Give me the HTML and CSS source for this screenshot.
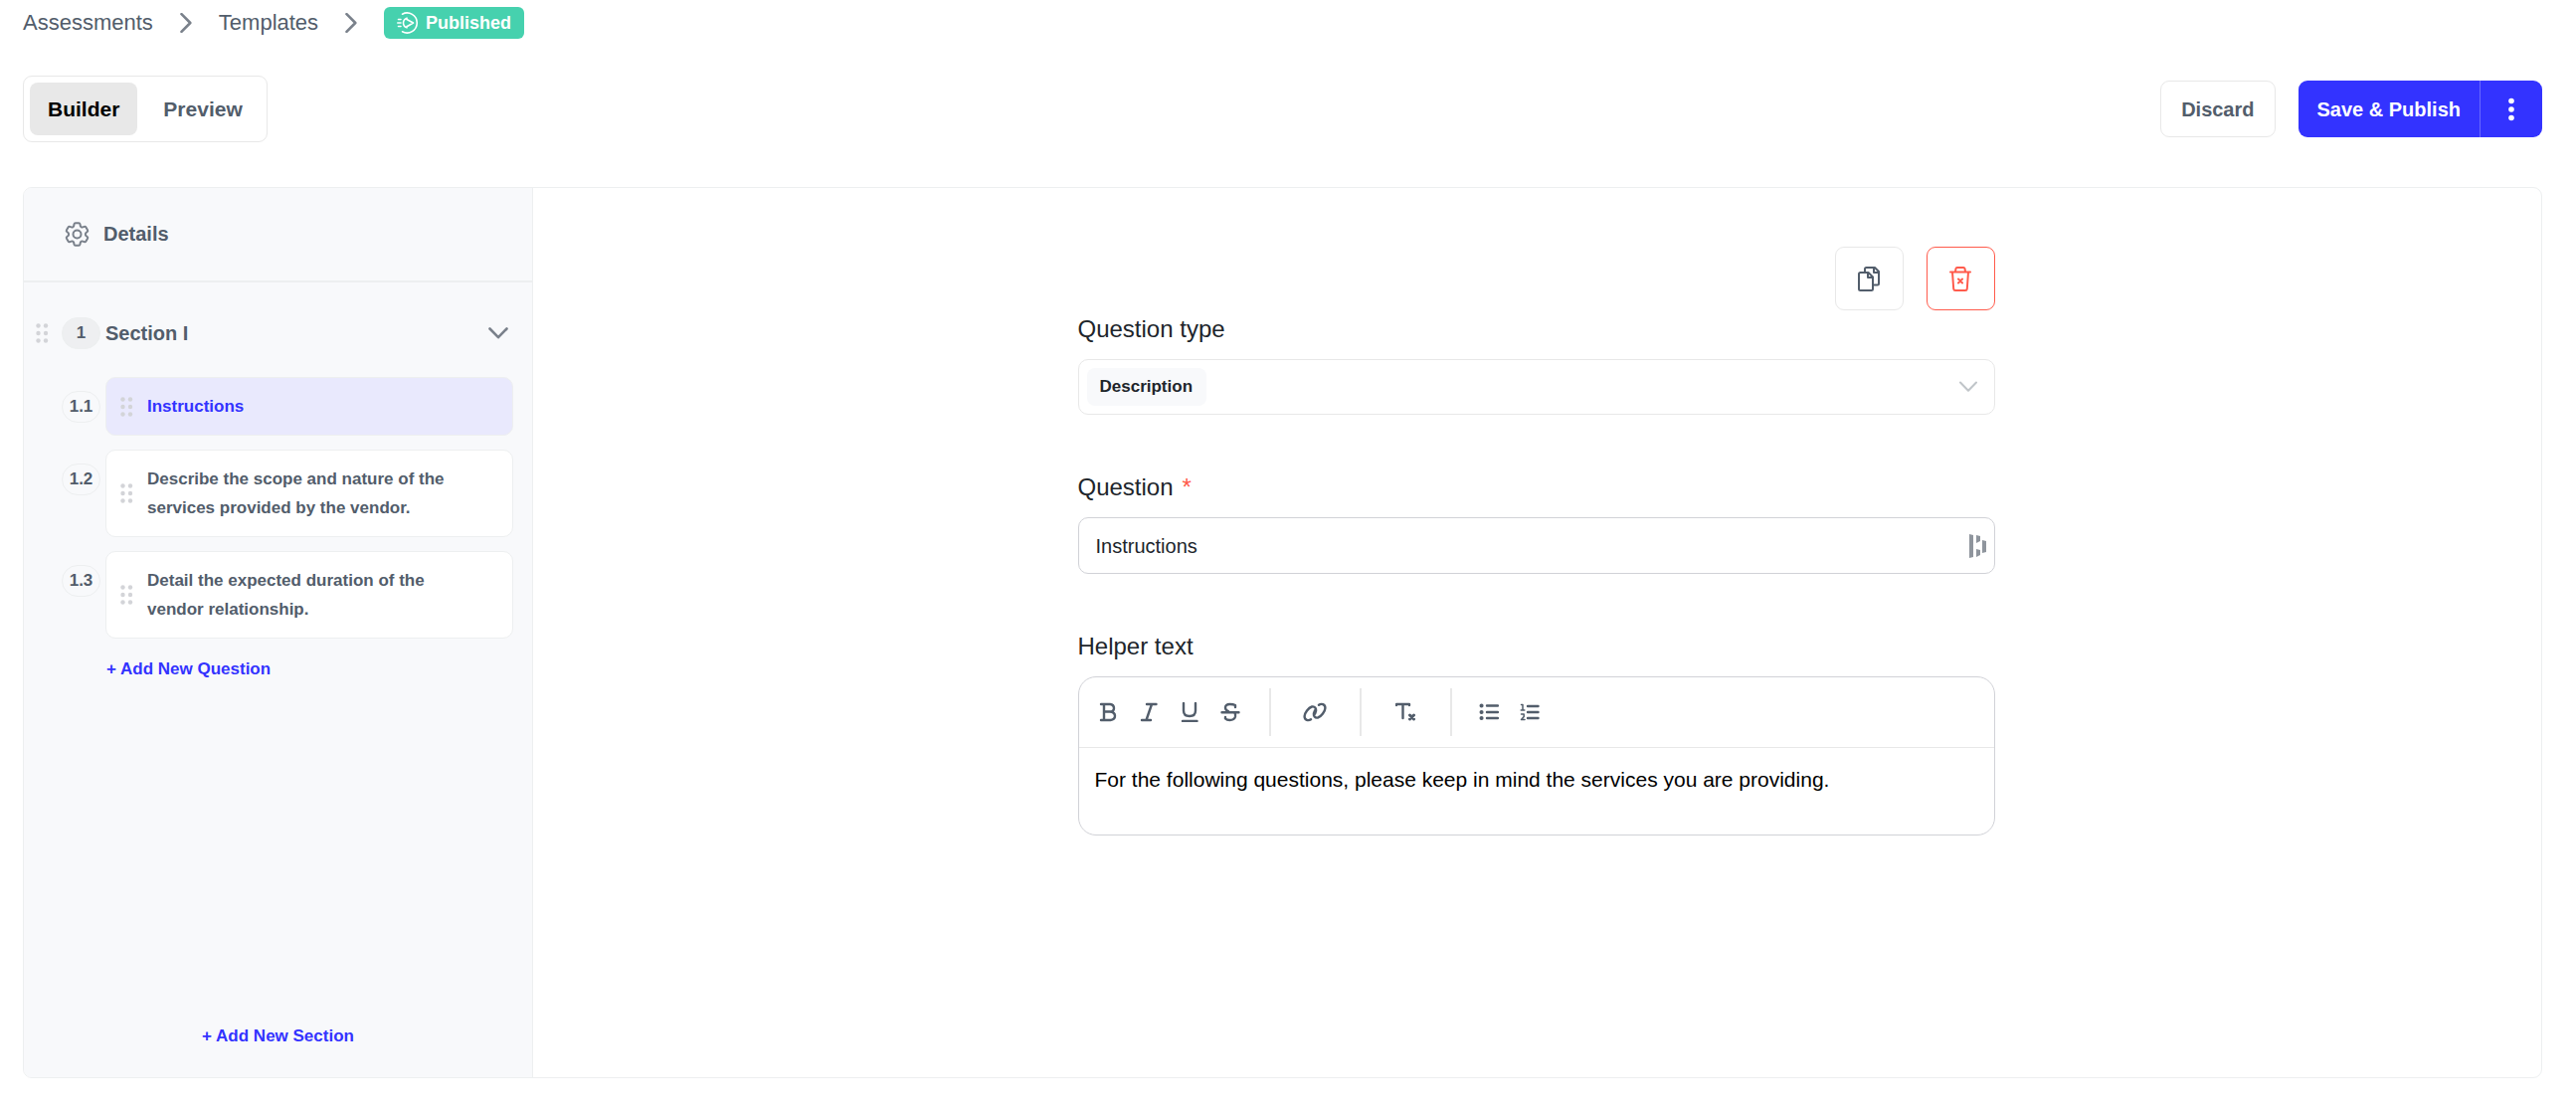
FILE: index.html
```html
<!DOCTYPE html>
<html lang="en">
<head>
<meta charset="utf-8">
<meta name="viewport" content="width=device-width, initial-scale=1">
<title>Template builder</title>
<link rel="stylesheet" href="styles.css">
</head>
<body>
<svg class="defs" aria-hidden="true">
  <symbol id="grip" viewBox="0 0 13 20">
    <g fill="#d3d4d8"><circle cx="2.5" cy="2.5" r="2.2"/><circle cx="10" cy="2.5" r="2.2"/><circle cx="2.5" cy="10" r="2.2"/><circle cx="10" cy="10" r="2.2"/><circle cx="2.5" cy="17.5" r="2.2"/><circle cx="10" cy="17.5" r="2.2"/></g>
  </symbol>
  <symbol id="crumb" viewBox="0 0 12 20">
    <path d="M1.5 1.2 10.3 10 1.5 18.8" fill="none" stroke="#7a818b" stroke-width="2.6" stroke-linecap="round" stroke-linejoin="round"/>
  </symbol>
</svg>

<nav class="crumbs" aria-label="Breadcrumb">
  <a href="#">Assessments</a>
  <svg class="crumb-sep" aria-hidden="true"><use href="#crumb"/></svg>
  <a href="#">Templates</a>
  <svg class="crumb-sep" aria-hidden="true"><use href="#crumb"/></svg>
  <span class="status">
    <svg width="22" height="22" viewBox="0 0 22 22" fill="none" stroke="#fff" stroke-width="1.6" stroke-linecap="round" stroke-linejoin="round" aria-hidden="true">
      <path d="M5.500 2.200A10 10 0 1 1 5.500 19.800M1.500 7.500H4M.8 11H4M1.500 14.500H4"/>
      <path d="M10 6.200Q6.500 7.500 6.500 11T10 15.800V14.500M10 6.200V7.500L16.500 11 10 14.800"/>
    </svg>
    Published
  </span>
</nav>

<header class="bar">
  <div class="tabs">
    <button class="tab tab-on" type="button">Builder</button>
    <button class="tab" type="button">Preview</button>
  </div>
  <div class="actions">
    <button class="discard" type="button">Discard</button>
    <div class="split">
      <button class="save" type="button">Save &amp; Publish</button>
      <button class="more" type="button" aria-label="More actions">
        <svg width="6" height="24" viewBox="0 0 6 24" fill="#fff"><circle cx="3" cy="3.500" r="2.800"/><circle cx="3" cy="12" r="2.800"/><circle cx="3" cy="20.500" r="2.800"/></svg>
      </button>
    </div>
  </div>
</header>

<div class="panel">
  <aside class="side">
    <a class="details" href="#">
      <svg width="25" height="25" viewBox="2 2 20 20" fill="none" stroke="#7a818b" stroke-width="1.600" stroke-linejoin="round" aria-hidden="true">
        <path d="M9.594 3.940c.09-.542.56-.94 1.110-.94h2.593c.55 0 1.020.398 1.110.94l.213 1.281c.063.374.313.686.645.87.074.04.147.083.22.127.325.196.72.257 1.075.124l1.217-.456a1.125 1.125 0 0 1 1.370.49l1.296 2.247a1.125 1.125 0 0 1-.26 1.431l-1.003.827c-.293.241-.438.613-.43.992a7.723 7.723 0 0 1 0 .255c-.008.378.137.75.43.991l1.004.827c.424.35.534.955.26 1.430l-1.298 2.247a1.125 1.125 0 0 1-1.369.491l-1.217-.456c-.355-.133-.75-.072-1.076.124a6.470 6.470 0 0 1-.22.128c-.331.183-.581.495-.644.869l-.213 1.281c-.09.543-.56.94-1.110.94h-2.594c-.55 0-1.019-.398-1.110-.94l-.213-1.281c-.062-.374-.312-.686-.644-.87a6.520 6.520 0 0 1-.22-.127c-.325-.196-.72-.257-1.076-.124l-1.217.456a1.125 1.125 0 0 1-1.369-.49l-1.297-2.247a1.125 1.125 0 0 1 .26-1.431l1.004-.827c.292-.24.437-.613.43-.991a6.932 6.932 0 0 1 0-.255c.007-.38-.138-.751-.43-.992l-1.004-.827a1.125 1.125 0 0 1-.26-1.430l1.297-2.247a1.125 1.125 0 0 1 1.370-.491l1.216.456c.356.133.751.072 1.076-.124.072-.044.146-.086.22-.128.332-.183.582-.495.644-.869l.214-1.280Z"/>
        <circle cx="12" cy="12" r="3.200"/>
      </svg>
      Details
    </a>
    <section class="section">
      <div class="section-head">
        <svg class="grip" aria-hidden="true"><use href="#grip"/></svg>
        <span class="num num-fill">1</span>
        <h2>Section I</h2>
        <button class="fold" type="button" aria-label="Collapse section">
          <svg width="20" height="12" viewBox="0 0 20 12" fill="none" stroke="#7a818b" stroke-width="2.600" stroke-linecap="round" stroke-linejoin="round"><path d="M1.500 1.500 10 10.200 18.500 1.500"/></svg>
        </button>
      </div>
      <ol class="items">
        <li><span class="num">1.1</span><a class="card card-on" href="#"><svg class="grip" aria-hidden="true"><use href="#grip"/></svg><span>Instructions</span></a></li>
        <li><span class="num">1.2</span><a class="card" href="#"><svg class="grip" aria-hidden="true"><use href="#grip"/></svg><span>Describe the scope and nature of the services provided by the vendor.</span></a></li>
        <li><span class="num">1.3</span><a class="card" href="#"><svg class="grip" aria-hidden="true"><use href="#grip"/></svg><span>Detail the expected duration of the vendor relationship.</span></a></li>
      </ol>
      <button class="add add-question" type="button">+ Add New Question</button>
    </section>
    <button class="add add-section" type="button">+ Add New Section</button>
  </aside>

  <main class="main">
    <form class="form">
      <div class="tools">
        <button class="tool" type="button" aria-label="Duplicate">
          <svg width="22" height="25" viewBox="0 0 22 25" fill="none" stroke="#525d6b" stroke-width="2" stroke-linejoin="round">
            <path d="M2 6H10.500L15 10.500V22.500Q15 24 13.500 24H2.500Q1 24 1 22.500V7.500Q1 6 2.500 6"/><path d="M10 6.500V11H14.800"/>
            <path d="M7 6V2.500Q7 1 8.500 1H17L21 5V17Q21 18.500 19.500 18.500H15.500M16 1.500V6H20.800"/>
          </svg>
        </button>
        <button class="tool tool-delete" type="button" aria-label="Delete">
          <svg width="22" height="25" viewBox="0 0 22 25" fill="none" stroke="#ff5b4c" stroke-width="2" stroke-linecap="round" stroke-linejoin="round">
            <path d="M1 5.500H21M6 5 6.500 2Q6.800 1 7.800 1H14.200Q15.200 1 15.500 2L16 5M3 5.500 4.200 22.300Q4.400 24 6 24H16Q17.600 24 17.800 22.300L19 5.500M9 12.500 13 16.500M13 12.500 9 16.500"/>
          </svg>
        </button>
      </div>

      <div class="field">
        <label for="type">Question type</label>
        <div class="picker">
          <select id="type"><option>Description</option></select>
          <svg width="18" height="12" viewBox="0 0 18 12" fill="none" stroke="#c0c5c9" stroke-width="2" stroke-linecap="round" stroke-linejoin="round" aria-hidden="true"><path d="M1 1.500 9 9.800 17 1.500"/></svg>
        </div>
      </div>

      <div class="field">
        <label for="question">Question<span class="req">*</span></label>
        <div class="entry">
          <input id="question" type="text" value="Instructions">
          <svg width="17" height="24" viewBox="0 0 17 24" fill="#8f959d" aria-hidden="true"><path d="M0 0 4 1V23L0 24ZM7 1 11 2V7L7 9ZM7 15 11 16V21L7 23ZM13 6 17 7V18L13 19Z"/></svg>
        </div>
      </div>

      <div class="field">
        <label for="helper">Helper text</label>
        <div class="editor">
          <div class="ribbon">
            <div class="group">
              <button type="button" aria-label="Bold"><svg width="20" height="20" viewBox="0 0 20 20"><path d="M3 2H12Q16 2.500 16 6T12 9.500H6M12 9.500Q17 10 17 13.800T12.500 18H3M6 2V18"/></svg></button>
              <button type="button" aria-label="Italic"><svg width="20" height="20" viewBox="0 0 20 20"><path d="M8 2H17.500M3 18H12M13 2 7.500 18"/></svg></button>
              <button type="button" aria-label="Underline"><svg width="20" height="20" viewBox="0 0 20 20"><path d="M4 1V8.500Q4 14 10 14T16 8.500V1M3 19H17.500"/></svg></button>
              <button type="button" aria-label="Strikethrough"><svg width="20" height="20" viewBox="0 0 20 20"><path d="M15 5V3Q13 2 9.500 2 5 2 5 5.500 5 8 8 9.200M1.500 10.200H18.500M14.500 11Q15.500 12.300 15 14.500 14 18 9.500 18 6.500 18 5 16.500V15"/></svg></button>
            </div>
            <div class="group group-solo">
              <button type="button" aria-label="Link"><svg width="24" height="20" viewBox="0 0 24 20"><path d="M8 17.200C5.500 19 1.500 18 1.600 14 1.700 11 5.500 5.500 9 4.500 12 3.800 13.500 6.500 13 9 12.700 10.500 12 12 11 13M16 2.800C18.500 1 22.500 2 22.400 6 22.300 9 18.500 14.500 15 15.500 12 16.200 10.500 13.500 11 11 11.300 9.500 12 8 13 7"/></svg></button>
            </div>
            <div class="group group-solo">
              <button type="button" aria-label="Clear formatting"><svg width="20" height="20" viewBox="0 0 20 20"><path d="M1 3V2H14V3M7.500 2V16"/><path class="heavy" d="M14.500 13 18.500 17M18.500 13 14.500 17"/></svg></button>
            </div>
            <div class="group group-lists">
              <button type="button" aria-label="Bulleted list"><svg width="20" height="20" viewBox="0 0 20 20"><path d="M8 3.500H19M8 10H19M8 16H19"/><path class="dots" d="M2.500 3.500h.1M2.500 10h.1M2.500 16h.1"/></svg></button>
              <button type="button" aria-label="Numbered list"><svg width="20" height="20" viewBox="0 0 20 20"><path d="M8 4H18.500M8 10H18.500M8 16H18.500"/><path class="fine" d="M1.500 2.500H3V7.500M1.200 8H4.800M1.500 12H4.200V14.500L1.500 17.500H5"/></svg></button>
            </div>
          </div>
          <textarea id="helper" rows="1">For the following questions, please keep in mind the services you are providing.</textarea>
        </div>
      </div>
    </form>
  </main>
</div>
</body>
</html>
```
FILE: styles.css
```css
:root {
  --slate: #525d6b;
  --ink: #20252b;
  --blue: #3333ff;
  --red: #ff5b4c;
  --line: #e8e8e8;
  --line-soft: #edeff0;
  --line-strong: #d1d2d7;
  --wash: #f8f9fb;
}

* { box-sizing: border-box; }

body {
  display: flex;
  flex-direction: column;
  min-height: 100vh;
  margin: 0;
  padding: 7px 34px 36px 23px;
  background: #fff;
  color: var(--slate);
  font-family: "Liberation Sans", Arial, sans-serif;
}

.defs { display: none; }

svg { display: block; flex: none; }

a { color: inherit; text-decoration: none; }

button {
  padding: 0;
  border: 0;
  background: none;
  color: inherit;
  font: bold 20px/24px "Liberation Sans", Arial, sans-serif;
  cursor: pointer;
}

/* Breadcrumb */

.crumbs {
  display: flex;
  align-items: center;
  gap: 27px;
  margin-bottom: 37px;
  font-size: 22px;
  line-height: 32px;
}

.crumb-sep { width: 12px; height: 20px; }

.status {
  display: flex;
  align-items: center;
  gap: 7px;
  padding: 0 13px;
  border-radius: 6px;
  background: #46d1ae;
  color: #fff;
  font-size: 18px;
  font-weight: bold;
}

/* Top bar */

.bar {
  display: flex;
  align-items: center;
  justify-content: space-between;
  margin-bottom: 45px;
}

.tabs {
  display: flex;
  gap: 8px;
  padding: 6px;
  border: 1px solid var(--line);
  border-radius: 9px;
}

.tab {
  height: 53px;
  padding: 0 18px;
  border-radius: 8px;
  font-size: 21px;
}

.tab-on { background: #e8e8e8; color: #000; }

.actions { display: flex; gap: 23px; }

.discard {
  height: 57px;
  padding: 0 20px;
  border: 1px solid var(--line);
  border-radius: 9px;
}

.split {
  display: flex;
  height: 57px;
  border-radius: 9px;
  background: var(--blue);
  color: #fff;
}

.save { padding: 0 19px; border-right: 1px solid #6a6aff; }

.more { display: grid; place-items: center; width: 62px; }

/* Panel */

.panel {
  display: flex;
  flex: 1;
  border: 1px solid var(--line-soft);
  border-radius: 9px;
  overflow: hidden;
}

.side {
  display: flex;
  flex-direction: column;
  flex: none;
  width: 512px;
  padding-bottom: 29px;
  border-right: 1px solid var(--line-soft);
  background: var(--wash);
}

.details {
  display: flex;
  align-items: center;
  gap: 14px;
  height: 95px;
  padding-left: 41px;
  border-bottom: 2px solid var(--line-soft);
  font-size: 20px;
  font-weight: bold;
}

.section { flex: 1; padding: 35px 19px 0 12px; }

.section-head {
  display: flex;
  align-items: center;
  margin-bottom: 28px;
}

.section-head .num { margin-left: 13px; }

h2 {
  flex: 1;
  margin: 0 0 0 5px;
  font-size: 20px;
  line-height: 24px;
}

.fold { padding: 6px 5px; }

.grip { width: 13px; height: 20px; }

.num {
  flex: none;
  width: 39px;
  height: 32px;
  border: 1px solid var(--line-soft);
  border-radius: 16px;
  font-size: 17px;
  font-weight: bold;
  line-height: 30px;
  text-align: center;
}

.num-fill { background: #eeeff1; }

.items {
  display: flex;
  flex-direction: column;
  gap: 14px;
  margin: 0;
  padding: 0 0 0 26px;
  list-style: none;
}

.items li { display: flex; gap: 5px; }

.items .num { margin-top: 14px; }

.card {
  display: flex;
  flex: 1;
  align-items: center;
  gap: 14px;
  padding: 14px 40px 14px 14px;
  border: 1px solid var(--line-soft);
  border-radius: 10px;
  background: #fff;
  font-size: 17px;
  font-weight: bold;
  line-height: 29px;
}

.card-on { background: #e9e9fd; color: var(--blue); }

.add { color: var(--blue); font-size: 17px; }

.add-question { margin: 19px 0 0 71px; }

.add-section { align-self: center; }

/* Question form */

.main { flex: 1; padding: 59px 42px 59px 40px; }

.form {
  display: flex;
  flex-direction: column;
  gap: 57px;
  max-width: 922px;
  margin: 0 auto;
}

.tools {
  display: flex;
  justify-content: flex-end;
  gap: 23px;
  margin-bottom: -54px;
}

.tool {
  display: grid;
  place-items: center;
  width: 69px;
  height: 64px;
  border: 1px solid var(--line);
  border-radius: 9px;
}

.tool-delete { border-color: var(--red); }

.field { display: flex; flex-direction: column; gap: 14px; }

label {
  color: var(--ink);
  font-size: 24px;
  line-height: 32px;
}

.req {
  margin-left: 9px;
  color: var(--red);
  line-height: 24px;
}

.picker {
  display: flex;
  align-items: center;
  justify-content: space-between;
  height: 56px;
  padding: 0 17px 0 8px;
  border: 1px solid var(--line);
  border-radius: 10px;
}

select {
  appearance: none;
  height: 38px;
  padding: 0 13px;
  border: 0;
  border-radius: 8px;
  background: var(--wash);
  color: var(--ink);
  font: bold 17px/24px "Liberation Sans", Arial, sans-serif;
}

.entry {
  display: flex;
  align-items: center;
  height: 57px;
  padding: 0 8px 0 17px;
  border: 1px solid var(--line-strong);
  border-radius: 10px;
}

input {
  flex: 1;
  padding: 0;
  border: 0;
  background: none;
  color: var(--ink);
  font: 20px/24px "Liberation Sans", Arial, sans-serif;
}

.editor {
  border: 1px solid var(--line-strong);
  border-radius: 18px;
}

.ribbon {
  display: flex;
  align-items: center;
  height: 71px;
  padding-left: 9px;
  border-bottom: 1px solid var(--line);
}

.group {
  display: flex;
  align-items: center;
  height: 48px;
  padding-right: 18px;
}

.group + .group { border-left: 2px solid var(--line); }

.group-solo { padding: 0 24px; }

.group-lists { padding: 0 17px; }

.group button {
  display: grid;
  place-items: center;
  width: 41px;
  height: 40px;
}

.group svg {
  fill: none;
  stroke: var(--slate);
  stroke-width: 2.400;
  stroke-linecap: round;
  stroke-linejoin: round;
}

.group .heavy { stroke-width: 3; }
.group .dots { stroke-width: 4; }
.group .fine { stroke-width: 1.500; }

textarea {
  display: block;
  width: 100%;
  height: 87px;
  padding: 20px 16px;
  border: 0;
  background: none;
  color: #000;
  font: 21px/24px "Liberation Sans", Arial, sans-serif;
  resize: none;
}
```
